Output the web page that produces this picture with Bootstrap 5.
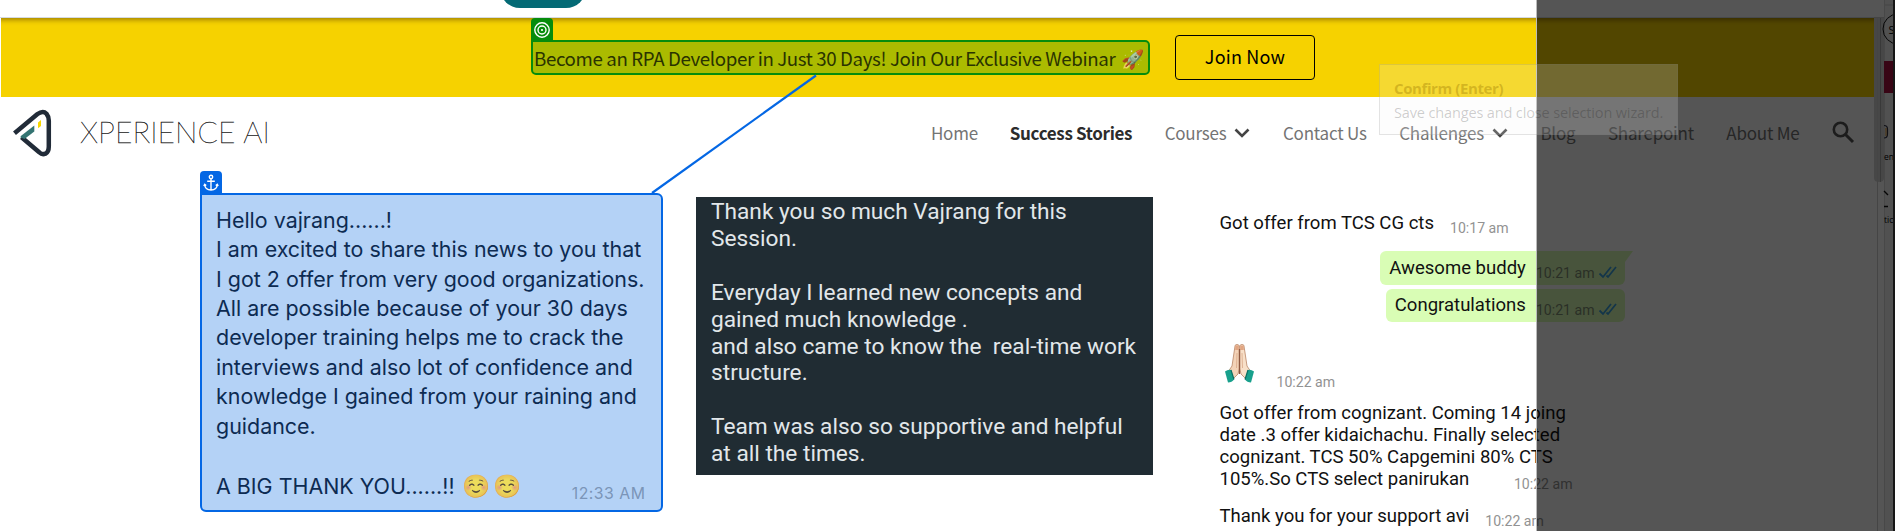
<!DOCTYPE html>
<html lang="en">
<head>
<meta charset="utf-8">
<title>Xperience AI - Success Stories</title>
<link href="https://cdn.jsdelivr.net/npm/bootstrap@5.3.0/dist/css/bootstrap.min.css" rel="stylesheet">
<style>
  body { height: 531px; background: #fff; font-family: "Noto Sans CJK SC", "Noto Sans", sans-serif; }
  .stage { width: 1895px; height: 531px; }
  .page-area { width: 1873px; }
  .topbar { height: 18px; border-bottom: 1px solid #d5dae2; }
  .pill { width: 86px; height: 40px; left: 500px; top: -32px; background: #046a75; border-radius: 20px; }

  .promo { height: 79px; margin-left: 1px; background: #f6d200; box-shadow: inset 0 7px 5px -5px rgba(80,50,0,.5); }
  .promo-text { width: 619px; height: 35px; margin: 22px 0 0 530px; padding-left: 1px; font-size: 18.7px; line-height: 32px; letter-spacing: -.37px;
    color: #2a3300; background: #abbb00; border: 2px solid #068c0c; border-radius: 0 5px 5px 5px; }
  .rocket { margin-left: 2px; opacity: .75; }
  .join { width: 140px; height: 45px; margin: 17px 0 0 25px; border: 1px solid #000; border-radius: 4px; color: #000; font-size: 18px; line-height: 40px; letter-spacing: .2px; padding: 0 0 3px; }
  .tagbox { width: 22px; height: 24px; left: -2px; top: -24px; border-radius: 4px 4px 0 0; }
  .tag-target { background: #068c0c; }
  .tag-anchor { background: #0467e4; }

  .navrow { height: 71px; }
  .brandmark { margin: 12px 0 0 12px; }
  .brandname { margin: 12px 0 0 27px; font: 100 30px/45px Lato, sans-serif; letter-spacing: .05px; color: #000; -webkit-text-stroke: .35px #222; }
  .site-nav { gap: 32.5px; margin: 21.5px 18px 0 0; height: 28px; }
  .site-link { font-size: 17px; line-height: 28px; letter-spacing: -.22px; color: #747474; text-decoration: none; }
  .site-link.current { color: #2c2c2c; font-weight: 700; letter-spacing: -.33px; margin-left: -.7px; }

  .story { width: 463px; height: 319px; margin: 25px 0 0 199.5px; padding: 10.6px 14px 0 14.5px; background: #b4d2f6; border: 2px solid #0467e4; border-radius: 0 6px 6px 6px;
    font: 400 21.45px/29.45px Inter, sans-serif; color: #0d2b52; }
  .story-time { font-size: 15.8px; letter-spacing: .5px; color: #7b95b8; margin: 8px 1px 0 0; }
  .smiles { font-size: 22.5px; letter-spacing: 3.2px; margin-left: 1px; opacity: .78; }
  .story-dark { width: 457px; height: 278px; margin: 29px 0 0 33.5px; padding: 2px 0 0 15px; background: #202c33; color: #e2e7ea; font: 400 22.7px/26.9px Roboto, sans-serif; }

  .chat { width: 430px; margin: 43.5px 0 0 66.5px; font: 400 18.55px/22px Roboto, sans-serif; color: #111; }
  .stamp { font-size: 14.1px; color: #929292; padding-top: 5px; }
  .bubble { height: 33.7px; padding: 5.6px 7px 0 9px; background: #d9fdb5; border-radius: 6px; margin-right: 25px; }
  .bubble .stamp { color: #7f8f74; margin: 0 3px 0 10px; }
  .bubble-first { margin-top: 12.5px; }
  .tail { right: -8px; top: 0; }
  .hands-row { margin-top: 21.6px; height: 48.2px; padding-left: 5px; }
  .hands-row .stamp { margin: 21.7px 0 0 23px; }
  .long-msg { margin-top: 9.6px; }
  .long-msg .stamp { margin: 0 0 -5px -52px; }
  .last-msg { margin-top: 15px; }

  .dim { left: 1536px; top: 0; width: 359px; height: 531px; background: rgba(0,0,0,.667); border-left: 1px solid #bbb; }
  .tip { left: 1379px; top: 64px; width: 299px; height: 71px; padding: 11.5px 14px; background: rgba(245,245,245,.2); border: 1px solid rgba(110,110,110,.18); font: 14.5px/22px "Open Sans", sans-serif; }
  .tip-title { font-weight: 700; font-size: 15px; letter-spacing: -.4px; color: rgba(150,115,0,.36); }
  .tip-body { margin-top: 3.5px; letter-spacing: -.14px; color: rgba(0,0,0,.2); }

  .edge { left: 1874px; top: 0; width: 21px; height: 531px; font: 9px "Open Sans", sans-serif; }
</style>
</head>
<body class="overflow-hidden">
<div class="stage position-relative overflow-hidden">
  <div class="topbar"></div>
  <div class="pill position-absolute"></div>

  <div class="promo page-area d-flex">
    <div class="promo-text position-relative text-nowrap">
      <span class="tagbox tag-target position-absolute d-flex justify-content-center align-items-center">
        <svg width="18" height="18" viewBox="0 0 18 18" fill="none" stroke="#fff" stroke-width="1.4"><circle cx="9" cy="9" r="7.2"/><circle cx="9" cy="9" r="4"/><circle cx="9" cy="9" r="1.1" fill="#fff" stroke="none"/></svg>
      </span>Become an RPA Developer in Just 30 Days! Join Our Exclusive Webinar <span class="rocket">🚀</span></div>
    <button class="join bg-transparent">Join Now</button>
  </div>

  <header class="navrow page-area d-flex align-items-start">
    <svg class="brandmark" width="41" height="48" viewBox="0 0 41 48">
      <path d="M2.500 23.800 25.500 4.500Q31 .600 34.500 4.200 36.800 7 36.800 11V37Q36.800 42.500 33.500 44.200 30 45.500 27.500 43L9.500 27.800" transform="translate(0 .500)" fill="none" stroke="#212b38" stroke-width="4.500" stroke-linejoin="round"/>
      <path d="M8.300 28.200Q8.300 27.600 9.500 26.500L22.300 16.500V22.500L12.500 30Z" fill="#347472"/>
      <path d="M26 13.500 29 11V17L26 19.300Z" fill="#f8d800"/>
    </svg>
    <span class="brandname text-nowrap">XPERIENCE AI</span>
    <nav class="site-nav ms-auto d-flex align-items-center text-nowrap">
      <a class="site-link">Home</a>
      <a class="site-link current">Success Stories</a>
      <a class="site-link d-flex align-items-center">Courses<svg class="ms-2" width="16" height="10" viewBox="0 0 16 10"><path d="M1.500 1.500 8 8 14.500 1.500" fill="none" stroke="#444" stroke-width="2.600"/></svg></a>
      <a class="site-link">Contact Us</a>
      <a class="site-link d-flex align-items-center">Challenges<svg class="ms-2" width="16" height="10" viewBox="0 0 16 10"><path d="M1.500 1.500 8 8 14.500 1.500" fill="none" stroke="#444" stroke-width="2.600"/></svg></a>
      <a class="site-link">Blog</a>
      <a class="site-link">Sharepoint</a>
      <a class="site-link">About Me</a>
      <svg width="23" height="23" viewBox="0 0 23 23" fill="none" stroke="#555" stroke-width="2.600"><circle cx="8.500" cy="8.500" r="6.700"/><path d="M13.500 13.500 21 21" stroke-width="3"/></svg>
    </nav>
  </header>

  <main class="d-flex align-items-start">
    <section class="story position-relative text-nowrap">
      <span class="tagbox tag-anchor position-absolute d-flex justify-content-center align-items-center">
        <svg width="16" height="18" viewBox="0 0 16 18" fill="none" stroke="#fff" stroke-width="1.400"><circle cx="8" cy="3" r="1.700"/><path d="M8 4.700V16M4.200 7.300H11.800M1.700 10.500Q2 15.800 8 16 14 15.800 14.300 10.500M.8 12 1.700 10.300 3.200 11.600M15.200 12 14.300 10.300 12.800 11.600"/></svg>
      </span>
      Hello vajrang......!<br>I am excited to share this news to you that<br>I got 2 offer from very good organizations.<br>All are possible because of your 30 days<br>developer training helps me to crack the<br>interviews and also lot of confidence and<br>knowledge I gained from your raining and<br>guidance.<br><br>
      <div class="d-flex justify-content-between"><span>A BIG THANK YOU......!! <span class="smiles">☺️☺️</span></span><span class="story-time">12:33 AM</span></div>
    </section>

    <section class="story-dark text-nowrap">Thank you so much Vajrang for this<br>Session.<br><br>Everyday I learned new concepts and<br>gained much knowledge .<br>and also came to know the&nbsp; real-time work<br>structure.<br><br>Team was also so supportive and helpful<br>at all the times.</section>

    <section class="chat d-flex flex-column text-nowrap">
      <div class="d-flex"><span>Got offer from TCS CG cts</span><span class="stamp ms-3">10:17 am</span></div>
      <div class="bubble bubble-first position-relative d-flex align-items-start align-self-end">
        <span>Awesome buddy</span><span class="stamp">10:21 am</span>
        <svg class="mt-2" width="20" height="14" viewBox="0 0 20 14" fill="none" stroke="#3b9fdc" stroke-width="1.800"><path d="M1.500 8.500 5 12 13 2M8.500 10.500 10 12 18 2"/></svg>
        <svg class="tail position-absolute" width="14" height="12" viewBox="0 0 14 12"><path d="M0 0H14L6 11H0Z" fill="#d9fdb5"/></svg>
      </div>
      <div class="bubble d-flex align-items-start align-self-end mt-1">
        <span>Congratulations</span><span class="stamp">10:21 am</span>
        <svg class="mt-2" width="20" height="14" viewBox="0 0 20 14" fill="none" stroke="#3b9fdc" stroke-width="1.800"><path d="M1.500 8.500 5 12 13 2M8.500 10.500 10 12 18 2"/></svg>
      </div>
      <div class="hands-row d-flex align-items-start">
        <svg width="29" height="39" viewBox="0 0 29 39">
          <path d="M10 2Q10 .500 12 .500T14.200 2V25L13 30 7 36 3 28 7 22Z" fill="#f3d3b8" stroke="#b98566" stroke-width=".8"/>
          <path d="M19 2Q19 .500 17 .500T14.800 2V25L16 30 22 36 26 28 22 22Z" fill="#f8e0c8" stroke="#b98566" stroke-width=".8"/>
          <path d="M10.200 1.500H13.800V6H10.200ZM15.200 1.500H18.800V6H15.200Z" fill="#e2a682"/>
          <path d="M14.500 5V30" stroke="#8d5840" stroke-width="1.200"/><path d="M12 9 11.500 24M17 9 17.500 24" stroke="#d9a888" stroke-width=".8"/>
          <path d="M0 27.500Q3 25.200 6 26L9 35.500Q7 38.500 3 38.500Z" fill="#18a08c"/><path d="M29 27.500Q26 25.200 23 26L20 35.500Q22 38.500 26 38.500Z" fill="#18a08c"/>
          <path d="M6 26 9 35.500M23 26 20 35.500" stroke="#0b6f62" stroke-width="1.200"/>
        </svg>
        <span class="stamp">10:22 am</span>
      </div>
      <div class="long-msg d-flex align-items-end"><span>Got offer from cognizant. Coming 14 joing<br>date .3 offer kidaichachu. Finally selected<br>cognizant. TCS 50% Capgemini 80% CTS<br>105%.So CTS select panirukan</span><span class="stamp">10:22 am</span></div>
      <div class="last-msg d-flex"><span>Thank you for your support avi</span><span class="stamp ms-3">10:22 am</span></div>
    </section>
  </main>

  <svg class="position-absolute top-0 start-0" width="900" height="200"><path d="M816 75.500 652 193" stroke="#0467e4" stroke-width="2.200"/></svg>
  <svg class="edge position-absolute" viewBox="0 0 21 531">
    <rect x="10.500" width="9" height="531" fill="#f4f4f4"/>
    <path d="M0 18H10V178Q10 182 5 182T0 178Z" fill="#d5d5d5"/>
    <path d="M3.500 18V531" stroke="#cfcfcf"/><path d="M6.500 18V182" stroke="#aaa"/>
    <path d="M0 17.500H10" stroke="#ccc"/><path d="M10.500 0V531" stroke="#d8d8d8"/>
    <path d="M11 5H19" stroke="#ccc"/>
    <circle cx="24" cy="29" r="15" fill="none" stroke="#111"/>
    <text x="14.500" y="34" font-size="11">S</text>
    <rect x="10" y="61" width="9" height="32" fill="#a8103f"/>
    <path d="M10 125.500Q13.500 125.500 13.500 129V134Q13.500 138 10 138" fill="none" stroke="#334" stroke-width="1.200"/><path d="M12 128V136" stroke="#d99028"/>
    <text x="10" y="160" font-size="8.500">en</text><path d="M10 191 14 195M10 206.500H14" stroke="#111" stroke-width="1.400"/><text x="10" y="223" font-size="8.500">tic</text>
    <rect x="19" width="2" height="531" fill="#444"/>
  </svg>
  <div class="dim position-absolute"></div>
  <div class="tip position-absolute text-nowrap"><div class="tip-title">Confirm (Enter)</div><div class="tip-body">Save changes and close selection wizard.</div></div>
</div>
<script src="https://cdn.jsdelivr.net/npm/bootstrap@5.3.0/dist/js/bootstrap.bundle.min.js"></script>
</body>
</html>
